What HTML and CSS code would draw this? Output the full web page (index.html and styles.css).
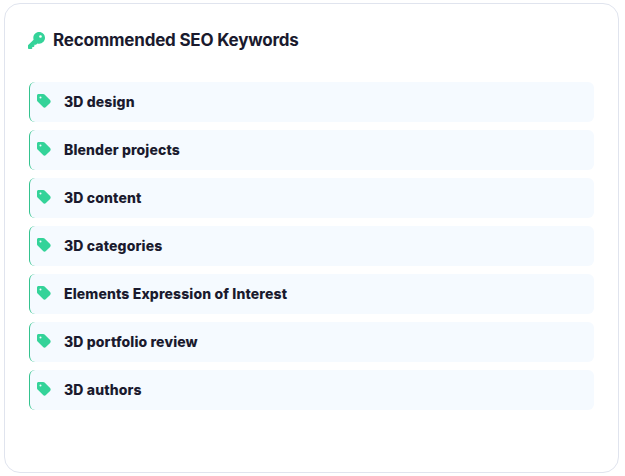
FILE: index.html
```html
<!DOCTYPE html>
<html lang="en">
<head>
<meta charset="utf-8">
<title>Recommended SEO Keywords</title>
<link rel="stylesheet" href="styles.css">
</head>
<body>
<section class="card">
  <h2 class="title">
    <svg class="key" viewBox="0 0 512 512"><path d="M336 352c97.200 0 176-78.800 176-176S433.200 0 336 0 160 78.800 160 176c0 18.700 2.900 36.800 8.300 53.700L7 391c-4.500 4.500-7 10.600-7 17v80c0 13.300 10.700 24 24 24h80c13.300 0 24-10.700 24-24v-40h40c13.300 0 24-10.700 24-24v-40h40c6.400 0 12.500-2.500 17-7l33.300-33.300c16.900 5.400 35 8.300 53.700 8.300zM376 96a40 40 0 1 1 0 80 40 40 0 1 1 0-80z"/></svg>
    <span>Recommended SEO Keywords</span>
  </h2>
  <ul class="list">
    <li class="row"><svg class="tag" viewBox="0 0 448 512"><path d="M0 80v149.500c0 17 6.700 33.300 18.700 45.300l176 176c25 25 65.500 25 90.500 0l133.500-133.500c25-25 25-65.500 0-90.500l-176-176C230.700 38.700 214.400 32 197.400 32H48C21.500 32 0 53.500 0 80zm112 32a32 32 0 1 1 0 64 32 32 0 1 1 0-64z"/></svg><span>3D design</span></li>
    <li class="row"><svg class="tag" viewBox="0 0 448 512"><path d="M0 80v149.500c0 17 6.700 33.300 18.700 45.300l176 176c25 25 65.500 25 90.500 0l133.500-133.500c25-25 25-65.500 0-90.500l-176-176C230.700 38.700 214.400 32 197.400 32H48C21.500 32 0 53.500 0 80zm112 32a32 32 0 1 1 0 64 32 32 0 1 1 0-64z"/></svg><span>Blender projects</span></li>
    <li class="row"><svg class="tag" viewBox="0 0 448 512"><path d="M0 80v149.500c0 17 6.700 33.300 18.700 45.300l176 176c25 25 65.500 25 90.500 0l133.500-133.500c25-25 25-65.500 0-90.500l-176-176C230.700 38.700 214.400 32 197.400 32H48C21.500 32 0 53.500 0 80zm112 32a32 32 0 1 1 0 64 32 32 0 1 1 0-64z"/></svg><span>3D content</span></li>
    <li class="row"><svg class="tag" viewBox="0 0 448 512"><path d="M0 80v149.500c0 17 6.700 33.300 18.700 45.300l176 176c25 25 65.500 25 90.500 0l133.500-133.500c25-25 25-65.500 0-90.500l-176-176C230.700 38.700 214.400 32 197.400 32H48C21.500 32 0 53.500 0 80zm112 32a32 32 0 1 1 0 64 32 32 0 1 1 0-64z"/></svg><span>3D categories</span></li>
    <li class="row"><svg class="tag" viewBox="0 0 448 512"><path d="M0 80v149.500c0 17 6.700 33.300 18.700 45.300l176 176c25 25 65.500 25 90.500 0l133.500-133.500c25-25 25-65.500 0-90.500l-176-176C230.700 38.700 214.400 32 197.400 32H48C21.500 32 0 53.500 0 80zm112 32a32 32 0 1 1 0 64 32 32 0 1 1 0-64z"/></svg><span>Elements Expression of Interest</span></li>
    <li class="row"><svg class="tag" viewBox="0 0 448 512"><path d="M0 80v149.500c0 17 6.700 33.300 18.700 45.300l176 176c25 25 65.500 25 90.500 0l133.500-133.500c25-25 25-65.500 0-90.500l-176-176C230.700 38.700 214.400 32 197.400 32H48C21.500 32 0 53.500 0 80zm112 32a32 32 0 1 1 0 64 32 32 0 1 1 0-64z"/></svg><span>3D portfolio review</span></li>
    <li class="row"><svg class="tag" viewBox="0 0 448 512"><path d="M0 80v149.500c0 17 6.700 33.300 18.700 45.300l176 176c25 25 65.500 25 90.500 0l133.500-133.500c25-25 25-65.500 0-90.500l-176-176C230.700 38.700 214.400 32 197.400 32H48C21.500 32 0 53.500 0 80zm112 32a32 32 0 1 1 0 64 32 32 0 1 1 0-64z"/></svg><span>3D authors</span></li>
  </ul>
</section>
</body>
</html>
```
FILE: styles.css
```css
* { box-sizing: border-box; }
html, body { height: 100%; }
body {
  margin: 0;
  padding: 3px 6px 3px 4px;
  background: #fff;
  font-family: Inter, "Open Sans", sans-serif;
  color: #1a1a2e;
}
.card {
  height: 470px;
  padding: 24px;
  border: 1px solid #e0e4ee;
  border-radius: 16px;
  background: #fff;
}
.title {
  display: flex;
  align-items: center;
  gap: 8px;
  height: 24px;
  margin: 0 0 30px;
  font-size: 17px;
  font-weight: 700;
  letter-spacing: -0.2px;
}
.key { width: 17px; height: 17px; margin-left: -1px; fill: #34d399; }
.list {
  display: flex;
  flex-direction: column;
  gap: 8px;
  margin: 0;
  padding: 0;
  list-style: none;
}
.row {
  display: flex;
  align-items: center;
  height: 40px;
  padding: 0 0 2px 7px;
  border-left: 1px solid #34c38f;
  border-radius: 6px;
  background: #f5faff;
  font-size: 14px;
  font-weight: 800;
  letter-spacing: 0.13px;
}
.tag { width: 14px; height: 16px; margin: 0 13px 0 0; fill: #34d399; }
```
